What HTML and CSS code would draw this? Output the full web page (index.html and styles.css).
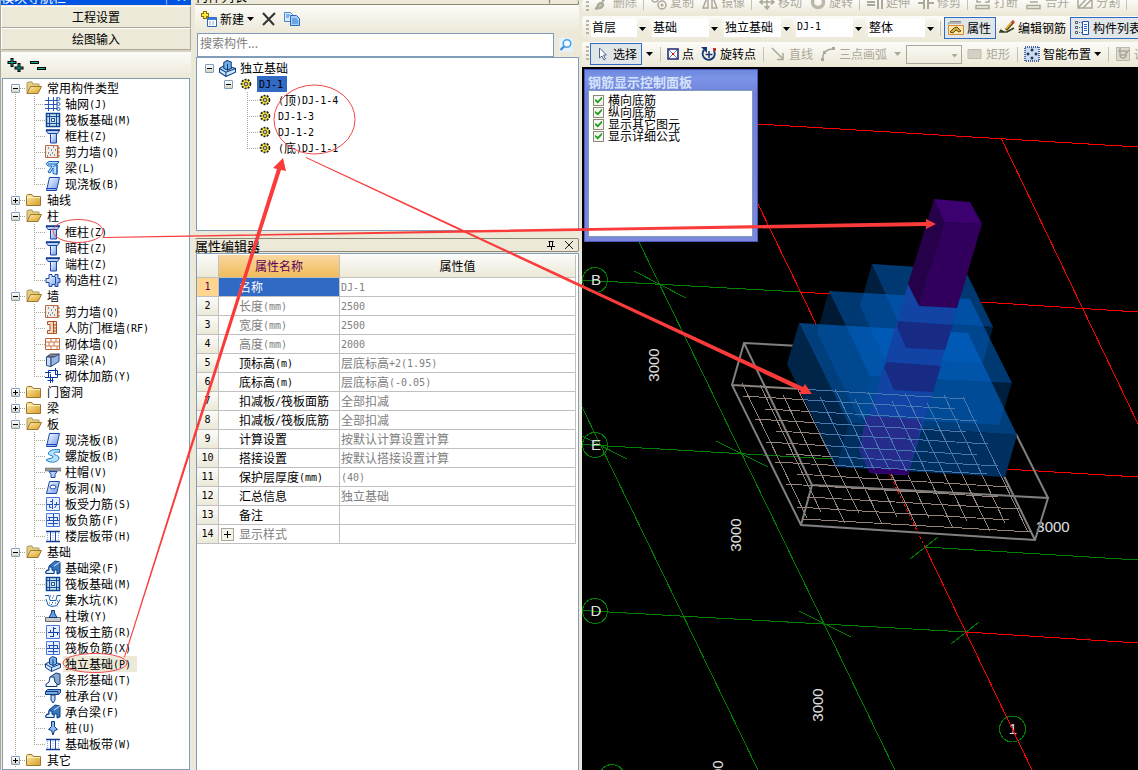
FILE: index.html
```
<!DOCTYPE html>
<html lang="zh-CN">
<head>
<meta charset="utf-8">
<title>独立基础</title>
<link rel="stylesheet" href="styles.css">
</head>
<body>

<svg class="symbols" aria-hidden="true">
	<defs>
		<linearGradient id="g-blue" x1="0" y1="0" x2="1" y2="1"><stop offset="0" stop-color="#fff"/><stop offset="1" stop-color="#6c98e8"/></linearGradient>
		<linearGradient id="g-fold" x1="0" y1="0" x2="1" y2="1"><stop offset="0" stop-color="#fff0a8"/><stop offset="1" stop-color="#d99a28"/></linearGradient>
	</defs>
	<symbol id="i-open" viewBox="0 0 16 16"><path d="M1 13V3l1-1h4l1 2h6v3" fill="#e8d078" stroke="#a89868"/><path d="M1 13.500L4.500 6.500H15.500L12 13.500Z" fill="url(#g-fold)" stroke="#98782c"/></symbol>
	<symbol id="i-folder" viewBox="0 0 16 16"><path d="M.5 13.500V3.500l1-1h4.500l1.500 2h7v9z" fill="url(#g-fold)" stroke="#98782c"/><path d="M1 5.500h13" stroke="#fff6c8"/></symbol>
	<symbol id="i-grid" viewBox="0 0 16 16"><path d="M3.500 1v14M8.500 1v14M0 4.500h13M0 8.500h13M0 12.500h13M12 1v13" stroke="#2858c0" fill="none"/><g fill="#fff" stroke="#2858c0"><circle cx="13.500" cy="3" r="1.500"/><circle cx="13.500" cy="8" r="1.500"/><circle cx="13.500" cy="13" r="1.500"/></g></symbol>
	<symbol id="i-raft" viewBox="0 0 16 16"><path d="M1.500 1.500h13v13h-13z" fill="#c8e0f8" stroke="#0c4890" stroke-width="1.500"/><path d="M4.500 2v12M11.500 2v12M2 4.500h12M2 11.500h12" stroke="#0c4890"/><path d="M6.500 6.500h3v3h-3z" fill="#fff" stroke="#0c4890"/></symbol>
	<symbol id="i-column" viewBox="0 0 16 16"><path d="M1 2.500h13.500l-2 3H3z" fill="#b8d0f8" stroke="#1848a8"/><path d="M1 2h14" stroke="#0c3880" stroke-width="1.500"/><path d="M5.500 5.500h6V15h-6z" fill="url(#g-blue)" stroke="#1848a8"/></symbol>
	<symbol id="i-wall" viewBox="0 0 16 16"><path d="M.5 1.500h12v12H.500z" fill="#eee" stroke="#c06838"/><path d="M13 1v13M13 4h2M13 8h2M13 12h2" stroke="#c05820"/><path d="M3 4h1M8 3h1M6 6h1M10 6h1M3 9h1M7 9h1M5 11h1M9 11h1M2 12h1" stroke="#333"/></symbol>
	<symbol id="i-beam" viewBox="0 0 16 16"><path d="M1 3.500l3-2h10l-2 3v10l-4-1V8L5 13 3 12l4-6H3z" fill="#b8e0ff" stroke="#1860b8"/><path d="M3 4h9l2-2M12 5v9M8 7l4-3" fill="none" stroke="#1860b8"/></symbol>
	<symbol id="i-slab" viewBox="0 0 16 16"><path d="M4.500 1.500h10l-3 13H1.500z" fill="url(#g-blue)" stroke="#1848b0"/><path d="M1.500 12.500h10" stroke="#1848b0"/></symbol>
	<symbol id="i-tie" viewBox="0 0 16 16"><path d="M4 2.500h3v2h3v-2h3v4h2v4h-2v4h-3v-2H7v2H4v-4H1v-4h3z" fill="url(#g-blue)" stroke="#1848a8"/><path d="M10.500 5v7" stroke="#1848a8"/></symbol>
	<symbol id="i-shelter" viewBox="0 0 16 16"><path d="M2.500 1.500h9v12h-9v-3H5v-6H2.500z" fill="#f4d8c0" stroke="#a85020"/><path d="M8.500 2v11M8 5h3M8 8h3M8 11h3" stroke="#a85020"/></symbol>
	<symbol id="i-brick" viewBox="0 0 16 16"><path d="M.5 2.500h14v11H.500z" fill="#fff" stroke="#c06030"/><path d="M1 6h14M1 10h14M6 3v3M11 3v3M4 6v4M9 6v4M6 10v3M12 10v3" stroke="#d07848"/></symbol>
	<symbol id="i-hidden" viewBox="0 0 16 16"><path d="M1.500 5l4-3h9l-3 3z" fill="#889" stroke="#444"/><path d="M1.500 5H6v9.500l-4.500-1z" fill="#c8dcf8" stroke="#284880"/><path d="M6 5h3l5-3v7.500l-8 5z" fill="#98b4e0" stroke="#284880"/></symbol>
	<symbol id="i-mesh" viewBox="0 0 16 16"><path d="M3.500 2.500h9v7h-9zM0 4.500h6M10 6.500h6M0 9.500h4M5.500 6v9M10.500 0v6M7.500 9.500v5M2.500 12.500h6" fill="none" stroke="#0838a8"/></symbol>
	<symbol id="i-spiral" viewBox="0 0 16 16"><path d="M14.500 1.500C7 1 3 3 3.500 6c.5 2 5 1 4.500 3-.5 2-5 1-7 3 5 4 13 2 13-2 0-3-5-2.500-5-4.500 0-1.500 3-2 5.500-1z" fill="#b8e0ff" stroke="#1880d0"/></symbol>
	<symbol id="i-cap" viewBox="0 0 16 16"><path d="M0 4h16v3H0z" fill="#999" stroke="#555" stroke-width=".5"/><path d="M4 7.500h8l-2 3v3H6v-3z" fill="#b8d0f8" stroke="#1848a8"/></symbol>
	<symbol id="i-hole" viewBox="0 0 16 16"><path d="M4.500 1.500h10l-3 12H1.500z" fill="url(#g-blue)" stroke="#1848b0"/><ellipse cx="8" cy="7" rx="3" ry="2" fill="#fff" stroke="#1848b0"/></symbol>
	<symbol id="i-rebar" viewBox="0 0 16 16"><path d="M1.500 1.500h13v13h-13z" fill="#e8f0ff" stroke="#4878d8"/><path d="M2 8.500h5M9 8.500h5M7.500 3v10M5 5.500h2.500M4.500 8.500v3h2M11.500 6v3l-2 3" stroke="#2050b8" fill="none"/></symbol>
	<symbol id="i-negbar" viewBox="0 0 16 16"><path d="M1.500 1.500h13v13h-13z" fill="#e8f0ff" stroke="#4878d8"/><path d="M3 5.500h10M3 11.500h10M8.500 2v12M4.500 5v3M12.500 5v3M2 8.500h12" stroke="#2050b8" fill="none"/></symbol>
	<symbol id="i-band" viewBox="0 0 16 16"><path d="M1 3.500h14M1 13.500h14" stroke="#0c3890" stroke-width="1.500"/><path d="M5.500 4v9M10.500 4v9" stroke="#1848a8"/><path d="M2.500 5v7M8 5v7M13.500 5v7" stroke="#88a8e0" stroke-dasharray="1 1"/></symbol>
	<symbol id="i-fbeam" viewBox="0 0 16 16"><path d="M1 13.500V11l3-2V6l6-5 5 1v11l-3 1v-4H9v3.500z" fill="#3878c0" stroke="#0c3c80"/><path d="M1 13.500V11l3-1V7h3v3l2 1v2.500z" fill="#d8ecff" stroke="#0c3c80"/><path d="M9 6l6-4" stroke="#d8ecff"/></symbol>
	<symbol id="i-pit" viewBox="0 0 16 16"><path d="M0 3.500h4l1 5h6l1-5h4M1 7l2 6 4 1.500 5-1 3-6" fill="none" stroke="#1860b8"/><path d="M5 4h1M8 4h1M7 6h1M4 11h1M7 10.500h1M10 11h1M6 12.500h1M12 9h1" stroke="#1848a8"/></symbol>
	<symbol id="i-pier" viewBox="0 0 16 16"><path d="M.5 9.500h15v4H.500z" fill="#ccc" stroke="#666"/><path d="M6.500 2.500h3V5l2.500 4.500H4L6.500 5z" fill="#68a0e0" stroke="#0c3c80"/></symbol>
	<symbol id="i-main" viewBox="0 0 16 16"><path d="M1.500 1.500h13v13h-13z" fill="#e8f0ff" stroke="#4878d8"/><path d="M3 8.500h11M8.500 3v10M5.500 6v3M12.500 8v3M8 4.500h3M5 12.500h3" stroke="#1040a8" fill="none"/></symbol>
	<symbol id="i-found" viewBox="0 0 16 16"><path d="M.5 8l5-3 10 3v3.500l-9 4-6-4z" fill="#d0e8ff" stroke="#0c3c80"/><path d="M.5 8l6 3.500 9-3.500M6.500 11.500v4" fill="none" stroke="#0c3c80"/><path d="M4.500 2.500l3-2 4 1.500v6L8 9.500 4.500 8z" fill="#78b0e8" stroke="#0c3c80"/><path d="M8 3.500v6" stroke="#0c3c80"/></symbol>
	<symbol id="i-strip" viewBox="0 0 16 16"><path d="M5 5l6-4 4 1v10l-4 1z" fill="#88a8c8" stroke="#0c3c80"/><path d="M1 14.500V12l3-2 1-5h4l1 5 2 2v2.500z" fill="#f4faff" stroke="#0c3c80"/></symbol>
	<symbol id="i-pilecap" viewBox="0 0 16 16"><path d="M.5 3.500l2-2h13v3l-2 2H.500z" fill="#78a8e0" stroke="#0c3c80"/><path d="M1 3.500h12v3" fill="none" stroke="#0c3c80"/><path d="M6 7h4v5l-2 3-2-3z" fill="#b8d8f8" stroke="#0c3c80"/></symbol>
	<symbol id="i-pile" viewBox="0 0 16 16"><path d="M6.500 1.500h3v5l3 3-3 1-1.500 4.500-1.500-4.500-3-1 3-3z" fill="#88b8f0" stroke="#0c3c80"/></symbol>
	<symbol id="i-gear" viewBox="0 0 12 12"><circle cx="6" cy="6" r="4.500" fill="#fff040" stroke="#222" stroke-width="1.600" stroke-dasharray="2 1.200"/><path d="M6 2v8M2 6h8M3 3l6 6M9 3l-6 6" stroke="#444" stroke-width=".5"/><circle cx="6" cy="6" r="1.500" fill="#fff" stroke="#222" stroke-width=".8"/></symbol>
</svg>

<main class="app">

<nav class="nav">
	<header class="nav-title"><span>模块导航栏</span><span class="marks">┬ ✕</span></header>
	<button class="nav-btn">工程设置</button>
	<button class="nav-btn">绘图输入</button>
	<div class="nav-tools">
		<button class="tool" aria-label="展开"><svg width="17" height="16" viewBox="0 0 17 16"><path d="M5 1v9M.5 5.500h9M12 6v9M7.500 11h9" stroke="#000" stroke-width="3"/><path d="M5 2v7M1.500 5.500h7M12 7v7M8.500 11h7" stroke="#18a898"/></svg></button>
		<button class="tool" aria-label="折叠"><svg width="17" height="16" viewBox="0 0 17 16"><path d="M0 5.500h9M7 11.500h9" stroke="#000" stroke-width="3"/><path d="M1 5.500h7M8 11.500h7" stroke="#18a898"/></svg></button>
	</div>
	<ul class="tree">
		<li><div class="row"><button class="exp minus" aria-label="折叠"></button><svg><use href="#i-open"/></svg>常用构件类型</div>
			<ul>
				<li><svg><use href="#i-grid"/></svg><span>轴网<i>(J)</i></span></li>
				<li><svg><use href="#i-raft"/></svg><span>筏板基础<i>(M)</i></span></li>
				<li><svg><use href="#i-column"/></svg><span>框柱<i>(Z)</i></span></li>
				<li><svg><use href="#i-wall"/></svg><span>剪力墙<i>(Q)</i></span></li>
				<li><svg><use href="#i-beam"/></svg><span>梁<i>(L)</i></span></li>
				<li><svg><use href="#i-slab"/></svg><span>现浇板<i>(B)</i></span></li>
			</ul>
		</li>
		<li><div class="row"><button class="exp plus" aria-label="展开"></button><svg><use href="#i-folder"/></svg>轴线</div></li>
		<li><div class="row"><button class="exp minus" aria-label="折叠"></button><svg><use href="#i-open"/></svg>柱</div>
			<ul>
				<li><svg><use href="#i-column"/></svg><span>框柱<i>(Z)</i></span></li>
				<li><svg><use href="#i-column"/></svg><span>暗柱<i>(Z)</i></span></li>
				<li><svg><use href="#i-column"/></svg><span>端柱<i>(Z)</i></span></li>
				<li><svg><use href="#i-tie"/></svg><span>构造柱<i>(Z)</i></span></li>
			</ul>
		</li>
		<li><div class="row"><button class="exp minus" aria-label="折叠"></button><svg><use href="#i-open"/></svg>墙</div>
			<ul>
				<li><svg><use href="#i-wall"/></svg><span>剪力墙<i>(Q)</i></span></li>
				<li><svg><use href="#i-shelter"/></svg><span>人防门框墙<i>(RF)</i></span></li>
				<li><svg><use href="#i-brick"/></svg><span>砌体墙<i>(Q)</i></span></li>
				<li><svg><use href="#i-hidden"/></svg><span>暗梁<i>(A)</i></span></li>
				<li><svg><use href="#i-mesh"/></svg><span>砌体加筋<i>(Y)</i></span></li>
			</ul>
		</li>
		<li><div class="row"><button class="exp plus" aria-label="展开"></button><svg><use href="#i-folder"/></svg>门窗洞</div></li>
		<li><div class="row"><button class="exp plus" aria-label="展开"></button><svg><use href="#i-folder"/></svg>梁</div></li>
		<li><div class="row"><button class="exp minus" aria-label="折叠"></button><svg><use href="#i-open"/></svg>板</div>
			<ul>
				<li><svg><use href="#i-slab"/></svg><span>现浇板<i>(B)</i></span></li>
				<li><svg><use href="#i-spiral"/></svg><span>螺旋板<i>(B)</i></span></li>
				<li><svg><use href="#i-cap"/></svg><span>柱帽<i>(V)</i></span></li>
				<li><svg><use href="#i-hole"/></svg><span>板洞<i>(N)</i></span></li>
				<li><svg><use href="#i-rebar"/></svg><span>板受力筋<i>(S)</i></span></li>
				<li><svg><use href="#i-negbar"/></svg><span>板负筋<i>(F)</i></span></li>
				<li><svg><use href="#i-band"/></svg><span>楼层板带<i>(H)</i></span></li>
			</ul>
		</li>
		<li><div class="row"><button class="exp minus" aria-label="折叠"></button><svg><use href="#i-open"/></svg>基础</div>
			<ul>
				<li><svg><use href="#i-fbeam"/></svg><span>基础梁<i>(F)</i></span></li>
				<li><svg><use href="#i-raft"/></svg><span>筏板基础<i>(M)</i></span></li>
				<li><svg><use href="#i-pit"/></svg><span>集水坑<i>(K)</i></span></li>
				<li><svg><use href="#i-pier"/></svg><span>柱墩<i>(Y)</i></span></li>
				<li><svg><use href="#i-main"/></svg><span>筏板主筋<i>(R)</i></span></li>
				<li><svg><use href="#i-negbar"/></svg><span>筏板负筋<i>(X)</i></span></li>
				<li><svg><use href="#i-found"/></svg><span class="current">独立基础<i>(P)</i></span></li>
				<li><svg><use href="#i-strip"/></svg><span>条形基础<i>(T)</i></span></li>
				<li><svg><use href="#i-pilecap"/></svg><span>桩承台<i>(V)</i></span></li>
				<li><svg><use href="#i-fbeam"/></svg><span>承台梁<i>(F)</i></span></li>
				<li><svg><use href="#i-pile"/></svg><span>桩<i>(U)</i></span></li>
				<li><svg><use href="#i-band"/></svg><span>基础板带<i>(W)</i></span></li>
			</ul>
		</li>
		<li><div class="row"><button class="exp plus" aria-label="展开"></button><svg><use href="#i-folder"/></svg>其它</div></li>
	</ul>
</nav>

<section class="middle">
	<header class="pane-title clipped"><span>构件列表</span><span class="marks">┬ ✕</span></header>
	<div class="list-tools">
		<button class="tool"><svg width="17" height="16" viewBox="0 0 17 16"><path d="M5 0v8M1 4h8" stroke="#8a7400" stroke-width="4"/><path d="M5 1v6M2 4h6" stroke="#ffe840" stroke-width="2"/><path d="M7.500 6.500h9v9h-9z" fill="#fff" stroke="#3068b8"/><path d="M8 8h8" stroke="#3880e0" stroke-width="2"/><path d="M9 11h6M9 13h6" stroke="#88a8d8" stroke-dasharray="2 1"/></svg>新建<b class="arrow"></b></button>
		<button class="tool" aria-label="删除"><svg width="14" height="14" viewBox="0 0 14 14"><path d="M1 1l11 12M13 1L1 13" stroke="#333" stroke-width="2"/></svg></button>
		<button class="tool" aria-label="复制"><svg width="16" height="14" viewBox="0 0 16 14"><path d="M.5.500h6l2 2v7h-8z" fill="#d8ecff" stroke="#4888d0"/><path d="M6.500 3.500h6l3 3v7h-9z" fill="#a8d0f8" stroke="#2868c0"/><path d="M2 3h4M2 5h3M8 7h5M8 9h6M8 11h6" stroke="#3878c8"/></svg></button>
	</div>
	<div class="search">
		<input type="text" placeholder="搜索构件..." aria-label="搜索构件">
		<button class="tool" aria-label="搜索"><svg width="14" height="14" viewBox="0 0 14 14"><path d="M0 0h14v14H0z" fill="#e4f2fd"/><circle cx="8" cy="5.500" r="3.800" fill="#f4faff" stroke="#48a0e8" stroke-width="1.600"/><path d="M5 8.500L1.500 12" stroke="#3888d8" stroke-width="2.200"/></svg></button>
	</div>
	<ul class="parts">
		<li><button class="exp minus" aria-label="折叠"></button><svg class="big"><use href="#i-found"/></svg><span>独立基础</span></li>
		<li class="lv2"><button class="exp minus" aria-label="折叠"></button><svg><use href="#i-gear"/></svg><span class="picked"><i>DJ-1</i></span></li>
		<li class="lv3"><svg><use href="#i-gear"/></svg><span><i>(</i>顶<i>)DJ-1-4</i></span></li>
		<li class="lv3"><svg><use href="#i-gear"/></svg><span><i>DJ-1-3</i></span></li>
		<li class="lv3"><svg><use href="#i-gear"/></svg><span><i>DJ-1-2</i></span></li>
		<li class="lv3"><svg><use href="#i-gear"/></svg><span><i>(</i>底<i>)DJ-1-1</i></span></li>
	</ul>
	<header class="pane-title"><span>属性编辑器</span>
		<button class="tool" aria-label="固定"><svg width="10" height="10" viewBox="0 0 10 10"><path d="M2.500 1.500h5M3.500 1v5M6.500 1v5M1 6.500h8M5.500 7v3" stroke="#000" fill="none"/></svg></button>
		<button class="tool" aria-label="关闭"><svg width="10" height="10" viewBox="0 0 10 10"><path d="M1 1l8 8M9 1L1 9" stroke="#222" fill="none"/></svg></button>
	</header>
	<div class="props">
		<table>
			<thead><tr><th class="num"></th><th class="name">属性名称</th><th>属性值</th></tr></thead>
			<tbody>
				<tr class="sel"><th>1</th><td>名称</td><td><i>DJ-1</i></td></tr>
				<tr class="off"><th>2</th><td>长度<i>(mm)</i></td><td><i>2500</i></td></tr>
				<tr class="off"><th>3</th><td>宽度<i>(mm)</i></td><td><i>2500</i></td></tr>
				<tr class="off"><th>4</th><td>高度<i>(mm)</i></td><td><i>2000</i></td></tr>
				<tr><th>5</th><td>顶标高<i>(m)</i></td><td>层底标高<i>+2(1.95)</i></td></tr>
				<tr><th>6</th><td>底标高<i>(m)</i></td><td>层底标高<i>(-0.05)</i></td></tr>
				<tr><th>7</th><td>扣减板<i>/</i>筏板面筋</td><td>全部扣减</td></tr>
				<tr><th>8</th><td>扣减板<i>/</i>筏板底筋</td><td>全部扣减</td></tr>
				<tr><th>9</th><td>计算设置</td><td>按默认计算设置计算</td></tr>
				<tr><th>10</th><td>搭接设置</td><td>按默认搭接设置计算</td></tr>
				<tr><th>11</th><td>保护层厚度<i>(mm)</i></td><td><i>(40)</i></td></tr>
				<tr><th>12</th><td>汇总信息</td><td>独立基础</td></tr>
				<tr><th>13</th><td>备注</td><td></td></tr>
				<tr class="off group"><th>14</th><td><button class="more" aria-label="展开"></button>显示样式</td><td></td></tr>
			</tbody>
		</table>
	</div>
</section>

<section class="work">
	<div class="bar edit-bar">
		<b class="grip"></b>
		<button class="tool off"><svg width="16" height="16" viewBox="0 0 16 16"><path d="M15 0L8 8M1 15c4-1 1-6 6-6 3 0 3 4-1 5z" fill="#c8c5b6" stroke="#aca899" stroke-width="2"/></svg>删除</button><b class="sep"></b>
		<button class="tool off"><svg width="16" height="16" viewBox="0 0 16 16"><circle cx="4" cy="5" r="3" fill="none" stroke="#aca899" stroke-width="1.500"/><circle cx="11" cy="11" r="4" fill="none" stroke="#aca899" stroke-width="1.500"/><circle cx="11" cy="11" r="1.500" fill="#aca899"/></svg>复制</button>
		<button class="tool off"><svg width="16" height="16" viewBox="0 0 16 16"><path d="M6 1v13H1zM10 1v13h5z" fill="none" stroke="#aca899" stroke-width="1.500"/></svg>镜像</button><b class="sep"></b>
		<button class="tool off"><svg width="16" height="16" viewBox="0 0 16 16"><path d="M8 1v14M1 8h14M5.500 4L8 1l2.500 3M5.500 12L8 15l2.500-3M4 5.500L1 8l3 2.500M12 5.500L15 8l-3 2.500" fill="none" stroke="#aca899" stroke-width="1.500"/></svg>移动</button>
		<button class="tool off"><svg width="16" height="16" viewBox="0 0 16 16"><circle cx="8" cy="8" r="5.500" fill="none" stroke="#bbb8aa" stroke-width="3.500"/></svg>旋转</button><b class="sep"></b>
		<button class="tool off"><svg width="16" height="16" viewBox="0 0 16 16"><path d="M0 8h8M0 11h8M11 2v13M15 2v13" stroke="#aca899" stroke-width="2"/></svg>延伸</button>
		<button class="tool off"><svg width="16" height="16" viewBox="0 0 16 16"><path d="M0 9h6M10 9h6M6 2v13M10 2v13" stroke="#aca899" stroke-width="2"/></svg>修剪</button><b class="sep"></b>
		<button class="tool off"><svg width="16" height="16" viewBox="0 0 16 16"><path d="M2 4v4h4M14 4v4h-4M1 11.500h13v3H1z" fill="none" stroke="#aca899" stroke-width="1.500"/></svg>打断</button>
		<button class="tool off"><svg width="16" height="16" viewBox="0 0 16 16"><path d="M4 8h8M1 11.500h13v3H1z" fill="none" stroke="#aca899" stroke-width="1.500"/></svg>合并</button>
		<button class="tool off"><svg width="16" height="16" viewBox="0 0 16 16"><path d="M1 4h14v10H1zM1 14L13 1M6 14l9-9" fill="none" stroke="#aca899" stroke-width="1.500"/></svg>分割</button><b class="sep"></b>
	</div>
	<div class="bar combo-bar">
		<b class="grip"></b>
		<span class="combo small"><select aria-label="楼层"><option>首层</option></select></span>
		<span class="combo"><select aria-label="构件类型"><option>基础</option></select></span>
		<span class="combo"><select aria-label="构件"><option>独立基础</option></select></span>
		<span class="combo latin"><select aria-label="构件名称"><option>DJ-1</option></select></span>
		<span class="combo"><select aria-label="单元"><option>整体</option></select></span>
		<b class="sep"></b>
		<button class="tool on"><svg width="16" height="16" viewBox="0 0 16 16"><path d="M2 1.500h11M0 6V3h13" stroke="#888" fill="none"/><path d="M.5 5.500h15v9H.500z" fill="#ffe8b0" stroke="#e08828"/><path d="M2 12l4-4 3-1 4 4-2 1-3-2-3 3z" fill="#d8b040" stroke="#604810"/></svg>属性</button>
		<button class="tool"><svg width="16" height="16" viewBox="0 0 16 16"><path d="M0 12h8l7-4M1 10l4 2" stroke="#304020" stroke-width="1.500" fill="none"/><path d="M14 2L7 10" stroke="#604818" stroke-width="3"/><path d="M13 2l-6 7" stroke="#e8b838" stroke-width="1.500"/><path d="M15 1l-2 2" stroke="#d04040" stroke-width="3"/></svg>编辑钢筋</button>
		<button class="tool on"><svg width="16" height="16" viewBox="0 0 16 16"><path d="M1.500 1.500h2v2h-2zM1.500 6.500h2v2h-2zM1.500 11.500h2v2h-2z" fill="#fff" stroke="#555"/><path d="M5 2.500h3M5 7.500h3M5 12.500h3" stroke="#3868c8" stroke-dasharray="1 1"/><path d="M8.500 1.500h6v13h-6z" fill="#fff" stroke="#2050a8"/><path d="M10 4.500h3M10 6.500h3M10 8.500h3M10 10.500h3" stroke="#2868d8"/></svg>构件列表</button>
	</div>
	<div class="bar draw-bar">
		<b class="grip"></b>
		<button class="tool on"><svg width="16" height="16" viewBox="0 0 16 16"><path d="M5.500 2v10l2.500-2 2 4 1.500-1-2-4h3z" fill="#fff" stroke="#506890"/></svg>选择</button><b class="arrow"></b><b class="sep"></b>
		<button class="tool"><svg width="12" height="12" viewBox="0 0 12 12"><path d="M1 1h10v10H1z" fill="#fff" stroke="#182870" stroke-width="1.500"/><path d="M2 2l8 8M10 2l-8 8" stroke="#6878a8"/><path d="M5 5h2v2H5z" fill="#e00000"/></svg>点</button>
		<button class="tool"><svg width="16" height="16" viewBox="0 0 16 16"><path d="M3 4a6 6 0 1 0 10 1" fill="none" stroke="#183878" stroke-width="2"/><path d="M0 1h6v6z" fill="#183878"/><path d="M8 5v7M4.500 8.500h7" stroke="#183878" stroke-width="1.500"/><path d="M12 2h3v3h-3z" fill="#c03030"/></svg>旋转点</button><b class="sep"></b>
		<button class="tool off"><svg width="16" height="16" viewBox="0 0 16 16"><path d="M2 2l11 11M13 7v6.500H7" fill="none" stroke="#aca899" stroke-width="1.500"/></svg>直线</button>
		<button class="tool off"><svg width="16" height="16" viewBox="0 0 16 16"><path d="M3 13C2 7 6 3 13 3" fill="none" stroke="#aca899" stroke-width="1.500"/><path d="M1 12h3v3H1zM12 1h3v3h-3zM3 5h3v3H3z" fill="#aca899"/></svg>三点画弧</button><b class="arrow off"></b>
		<span class="combo blank"><select aria-label="画弧方式" disabled><option></option></select></span>
		<button class="tool off"><svg width="16" height="16" viewBox="0 0 16 16"><path d="M1 3.500h13v9H1z" fill="#d4d1c4" stroke="#c0bdae"/></svg>矩形</button><b class="sep"></b>
		<button class="tool"><svg width="16" height="16" viewBox="0 0 16 16"><path d="M1 1h14v14H1z" fill="#c8dcf8" stroke="#183878" stroke-width="1.500" stroke-dasharray="1 1"/><path d="M8 2.500v3M6.500 4h3M8 10.500v3M6.500 12h3M2.500 8h3M4 6.500v3M10.500 8h3M12 6.500v3" stroke="#000"/></svg>智能布置<b class="arrow"></b></button><b class="sep"></b>
		<button class="tool off"><svg width="16" height="16" viewBox="0 0 16 16"><path d="M1.500 1.500h13v13h-13z" fill="#dddace" stroke="#bbb8aa"/><path d="M3 5h8v4a3 3 0 0 1-6 0V2M5 9h5l4-5" fill="none" stroke="#aca899" stroke-width="1.500"/></svg>调整</button>
	</div>

	<div class="viewport">
		<svg class="scene">
			<defs>
				<clipPath id="solid"><path d="M787 364L799 323L829 291L872 264L968 271L1017 435L1005 477L836 467Z"/></clipPath>
				<g id="bars" class="crisp" fill="none" stroke="currentColor">
					<path d="M733 385L965 399M743 396L955 409M765 409L977 421M755 419L966 432M776 431L988 444M766 442L977 455M786 454L998 466M775 462L987 474M797 474L1009 487M786 484L998 497M807 497L1019 509M797 507L1009 520M803 519L1032 532"/>
					<path d="M742 383L807 518M760 385L821 512M783 395L845 523M798 390L859 513M820 397L882 524M835 389L897 517M855 399L917 527M868 392L929 518M892 401L953 528M905 393L967 521M927 403L990 531M944 395L1005 523M963 397L1028 532"/>
				</g>
			</defs>
			<g class="space">
				<g class="crisp" fill="none" stroke="#008000">
					<path d="M582 280L800 292M582 444.500L832 459M582 610.500L966 632M925 547L1138 560"/>
					<path d="M639 242L895 770M582 407L758 770"/>
					<path d="M634 271L686 298M716 441L768 467M582 436L627 459M799 611L851 637M910 559L938 537M951 644L979 622"/>
				</g>
				<g class="dims">
					<text transform="translate(659 365) rotate(-90)">3000</text>
					<text transform="translate(741 535) rotate(-90)">3000</text>
					<text transform="translate(823 705) rotate(-90)">3000</text>
					<text transform="translate(723 777) rotate(-90)">3000</text>
					<text x="1053" y="532">3000</text>
					<text x="1013" y="734">1</text>
					<text x="596" y="285">B</text>
					<text x="596" y="450">E</text>
					<text x="596" y="616">D</text>
				</g>
				<g class="crisp" fill="none" stroke="#008000">
					<circle cx="595" cy="280" r="12.500"/><circle cx="595" cy="445" r="12.500"/><circle cx="595" cy="611" r="12.500"/><circle cx="612" cy="777" r="12.500"/><circle cx="1012.500" cy="729" r="13"/>
				</g>
				<g class="crisp" fill="none" stroke="#f00">
					<path d="M757 124L1138 147M1001 138L1138 424M757 202L818 328M800 292L830 294M981 302L1138 312M1004 469L1138 477M966 632L1138 643M925 547L1032 770"/>
					<path d="M889 473L925 547" stroke-dasharray="3 2"/>
				</g>
				<g fill="none" stroke="#808080" stroke-width="2">
					<path d="M800 346L744 343L732 385L801 525L1035 540L1048 498L812 485L744 343M812 485L801 525M1048 498L1016 434M1035 540L1004 476M732 385L802 389"/>
				</g>
				<use href="#bars" color="#95847c"/>
				<g fill="#0068d0">
					<path d="M799 323L787 364L836 467L848 423Z" fill="#002548"/>
					<path d="M848 423L1017 435L1005 477L836 467Z" fill="#003060"/>
					<path d="M799 323L968 333L1017 435L848 423Z" fill="#003f7c"/>
					<path d="M829 291L817 332L858 417L870 376Z" fill-opacity=".25"/>
					<path d="M829 291L970 299L1012 383L870 376Z" fill-opacity=".54"/>
					<path d="M870 376L1012 383L999 425L858 417Z" fill-opacity=".3"/>
					<path d="M872 264L860 306L884 357L897 320Z" fill-opacity=".3"/>
					<path d="M872 264L965 270L993 327L897 320Z" fill-opacity=".54"/>
					<path d="M897 320L993 327L983 363L884 357Z" fill-opacity=".3"/>
				</g>
				<path d="M908 284L919 306L957 308L908 475L870 473L859 450Z" fill="#1244a6"/>
				<path d="M898 321L953 325L945 350L906 348L897 327Z" fill="#172a84"/>
				<path d="M887 362L941 366L933 392L894 390L884 367Z" fill="#172a84"/>
				<path d="M866 416L922 420L908 475L870 473L859 450Z" fill="#252c8c"/>
				<path d="M867 467L910 469L908 475L870 473Z" fill="#30006a"/>
				<path d="M934 199L944 222L919 306L908 284Z" fill="#260048"/>
				<path d="M944 222L982 224L957 308L919 306Z" fill="#30005c"/>
				<path d="M934 199L970 202L982 224L944 222Z" fill="#3c0070"/>
				<use href="#bars" color="#4878b0" clip-path="url(#solid)"/>
			</g>
		</svg>
		<form class="dialog">
			<h2>钢筋显示控制面板</h2>
			<div class="checks">
				<label><input type="checkbox" checked>横向底筋</label>
				<label><input type="checkbox" checked>纵向底筋</label>
				<label><input type="checkbox" checked>显示其它图元</label>
				<label><input type="checkbox" checked>显示详细公式</label>
			</div>
		</form>
	</div>
</section>

<svg class="notes" aria-hidden="true">
	<g fill="none" stroke="#f04848">
		<ellipse cx="78" cy="231" rx="25" ry="11.500"/>
		<ellipse cx="95" cy="663" rx="32" ry="9.500"/>
		<ellipse cx="314.500" cy="119.500" rx="40.500" ry="34.500"/>
	</g>
	<g fill="#fb3a3a">
		<path d="M103 237L926 222V219L936 224L926 229V226L103 238Z"/>
		<path d="M124 657L277 169L273 168L283 158L286 171L281 170L125 657Z"/>
		<path d="M306 157L803 387L805 384L812 394L799 394L801 391L306 158Z"/>
	</g>
</svg>

</main>
</body>
</html>
```
FILE: styles.css
```
* {
	box-sizing: border-box;
}
body {
	margin: 0;
	background: #ece9d8;
	color: #000;
	font: 12px/16px "Noto Sans CJK SC", sans-serif;
}
ul {
	list-style: none;
	margin: 0;
	padding: 0;
}
button {
	border: 0;
	padding: 0;
	background: none;
	color: inherit;
	font: inherit;
}
/* half-width latin next to the 12px hanzi */
i {
	font: 10px/12px "DejaVu Sans Mono", monospace;
	vertical-align: 1px;
}
svg {
	flex: none;
}
.symbols {
	position: absolute;
	width: 0;
	height: 0;
}
.app {
	position: relative;
	display: flex;
	height: 100vh;
	overflow: hidden;
}

/* navigation */
.nav {
	flex: none;
	display: flex;
	flex-direction: column;
	width: 191px;
	border-left: 1px solid #aca899;
}
.nav-title {
	flex: none;
	display: flex;
	justify-content: space-between;
	align-items: flex-end;
	height: 5px;
	margin-bottom: 1px;
	overflow: hidden;
	background: #0054e3;
	color: #fff;
	font-size: 13px;
	line-height: 16px;
}
.marks {
	margin-right: 4px;
}
.nav-btn {
	flex: none;
	height: 22px;
	border: 1px solid;
	border-color: #fff #aca899 #aca899 #fff;
	background: #ece9d8;
}
.nav-tools {
	flex: none;
	display: flex;
	gap: 6px;
	height: 28px;
	padding: 6px;
	border-top: 2px solid #d8d4c4;
	background: linear-gradient(#fcfbf8, #ece9d8);
}
.tree {
	flex: 1;
	min-height: 0;
	overflow: hidden;
	margin: 0 1px;
	padding-top: 1px;
	border: 1px solid #7f9db9;
	background: #fff;
}
.tree > li {
	background: repeating-linear-gradient(#aca899 0 1px, transparent 1px 2px) 12px 0 / 1px 100% no-repeat;
}
.tree > li:first-child {
	background-position: 12px 8px;
}
.row {
	display: flex;
	align-items: center;
	height: 16px;
	padding-left: 8px;
	white-space: nowrap;
	background: repeating-linear-gradient(to right, #aca899 0 1px, transparent 1px 2px) 17px 8px / 6px 1px no-repeat;
}
.row svg {
	width: 16px;
	height: 16px;
	margin: 0 5px 0 6px;
}
.exp {
	flex: none;
	width: 9px;
	height: 9px;
	border: 1px solid #7f9db9;
	border-radius: 1px;
}
.minus {
	background: linear-gradient(#000, #000) center / 5px 1px no-repeat, linear-gradient(#fff, #d8d4c4);
}
.plus {
	background: linear-gradient(#000, #000) center / 5px 1px no-repeat, linear-gradient(#000, #000) center / 1px 5px no-repeat, linear-gradient(#fff, #d8d4c4);
}
.tree ul {
	margin-left: 31px;
}
.tree ul li {
	display: flex;
	align-items: center;
	height: 16px;
	padding-left: 11px;
	white-space: nowrap;
	background:
		repeating-linear-gradient(#aca899 0 1px, transparent 1px 2px) 0 0 / 1px 100% no-repeat,
		repeating-linear-gradient(to right, #aca899 0 1px, transparent 1px 2px) 0 8px / 11px 1px no-repeat;
}
.tree ul li:last-child {
	background-size: 1px 8px, 11px 1px;
}
.tree ul svg {
	width: 16px;
	height: 16px;
	margin-right: 2px;
}
.tree ul span {
	padding: 0 6px 0 2px;
}
.tree .current {
	background: #ece9d8;
}

/* component list + property editor */
.middle {
	flex: none;
	display: flex;
	flex-direction: column;
	width: 384px;
	margin-left: 4px;
}
.pane-title {
	flex: none;
	display: flex;
	align-items: center;
	gap: 8px;
	height: 14px;
	margin-top: 7px;
	padding-right: 4px;
	border: 1px solid #8c8878;
	border-left: 0;
	border-radius: 2px;
	font-size: 13px;
	line-height: 13px;
}
.pane-title span:first-child {
	flex: 1;
}
.clipped {
	align-items: flex-end;
	height: 5px;
	margin-top: 0;
	border-top: 0;
	overflow: hidden;
	line-height: 16px;
}
.tool {
	flex: none;
	display: flex;
	align-items: center;
	gap: 3px;
	white-space: nowrap;
}
.arrow {
	flex: none;
	width: 7px;
	height: 4px;
	background: #000;
	clip-path: polygon(0 0, 100% 0, 50% 100%);
}
.arrow.off {
	background: #aca899;
}
.list-tools {
	flex: none;
	display: flex;
	align-items: center;
	gap: 8px;
	height: 28px;
	padding-left: 5px;
	background: linear-gradient(#fcfbf8, #ece9d8);
}
.search {
	flex: none;
	display: flex;
	gap: 5px;
	height: 24px;
	margin-left: 2px;
}
.search input {
	width: 357px;
	padding: 0 2px 4px;
	border: 1px solid #7f9db9;
	background: #fff;
	font: inherit;
}
.search input::placeholder {
	color: #808080;
}
.parts {
	flex: none;
	height: 174px;
	margin-left: 1px;
	padding: 2px 8px;
	border: 1px solid #7f9db9;
	background: #fff;
}
.parts li {
	display: flex;
	align-items: center;
	height: 16px;
}
.parts svg {
	width: 12px;
	height: 12px;
	margin: 0 5px 0 7px;
}
.parts .big {
	width: 17px;
	height: 17px;
	margin: 0 4px 0 5px;
}
.parts .lv2 {
	padding-left: 19px;
}
.parts .lv3 {
	margin-left: 42px;
	padding-left: 5px;
	background:
		repeating-linear-gradient(#aca899 0 1px, transparent 1px 2px) 0 0 / 1px 100% no-repeat,
		repeating-linear-gradient(to right, #aca899 0 1px, transparent 1px 2px) 0 8px / 11px 1px no-repeat;
}
.parts .lv3 span {
	padding-left: 2px;
}
.parts .lv3:last-child {
	background-size: 1px 8px, 11px 1px;
}
.parts .picked {
	padding: 0 4px 0 2px;
	background: #316ac5;
}
.props {
	flex: 1;
	min-height: 0;
	margin: 1px 0 0 1px;
	padding: 1px 2px 0 0;
	border: 1px solid #7f9db9;
	border-bottom: 0;
	background: #fff;
}
table {
	width: 100%;
	table-layout: fixed;
	border-collapse: separate;
	border-spacing: 0;
}
th,
td {
	height: 19px;
	padding: 0 0 0 1px;
	border-right: 1px solid #c0c0c0;
	border-bottom: 1px solid #c0c0c0;
	line-height: 16px;
	text-align: left;
	font-weight: normal;
	white-space: nowrap;
}
th {
	padding: 0;
	text-align: center;
	background: linear-gradient(#fcfbf8, #ece9d8);
}
thead th {
	height: 23px;
}
tbody th {
	font: 10px/16px "DejaVu Sans Mono", monospace;
}
.num {
	width: 22px;
}
.name {
	width: 121px;
	color: #600058;
	background: linear-gradient(#fad8a0, #f0bc5c);
}
td:nth-child(2) {
	padding-left: 20px;
}
td:nth-child(3),
.off td {
	color: #808080;
}
.sel th {
	background: #ffd590;
	color: #600058;
}
.sel td:nth-child(2) {
	background: #316ac5;
	color: #fff;
}
.group td:nth-child(2) {
	display: flex;
	align-items: center;
	gap: 5px;
	padding-left: 2px;
}
.more {
	width: 13px;
	height: 13px;
	border: 1px solid #aca899;
	background: linear-gradient(#000, #000) center / 7px 1px no-repeat, linear-gradient(#000, #000) center / 1px 7px no-repeat, #f4f2ea;
}

/* toolbars */
.work {
	flex: 1;
	display: flex;
	flex-direction: column;
	min-width: 0;
	padding-left: 3px;
}
.bar {
	flex: none;
	display: flex;
	align-items: center;
	height: 24px;
	margin-bottom: 2px;
	padding-left: 4px;
	overflow: hidden;
	border-radius: 3px 0 0 3px;
	background: linear-gradient(#fcfbf8, #ece9d8);
}
.grip {
	flex: none;
	align-self: center;
	width: 3px;
	height: 16px;
	background: repeating-linear-gradient(#b8b4a4 0 2px, transparent 2px 4px);
}
.sep {
	flex: none;
	width: 1px;
	height: 15px;
	background: #c5c2b0;
}
.tool.off {
	color: #aca899;
}
.tool.on {
	height: 22px;
	padding: 0 4px 0 3px;
	border: 1px solid #316ac5;
	background: #e1e6e8;
}
.edit-bar {
	align-items: flex-end;
	gap: 8px;
	height: 14px;
	padding-bottom: 4px;
}
.edit-bar .grip {
	margin-right: -3px;
}
.edit-bar .sep {
	margin: 0 -1px 0 -2px;
}
.combo-bar {
	gap: 3px;
}
.combo-bar .grip {
	margin-right: -1px;
}
.combo {
	position: relative;
	flex: none;
	width: 69px;
	height: 18px;
	background: #fff;
}
.combo.small {
	width: 58px;
}
.combo::after {
	content: "";
	position: absolute;
	right: 3px;
	top: 8px;
	width: 7px;
	height: 4px;
	background: #000;
	clip-path: polygon(0 0, 100% 0, 50% 100%);
}
select {
	appearance: none;
	display: block;
	width: 100%;
	height: 100%;
	margin: 0;
	padding: 0 12px 2px 1px;
	border: 0;
	border-radius: 0;
	background: linear-gradient(#f6f4ec, #ece9d8) right / 12px 100% no-repeat;
	color: #000;
	font: inherit;
}
.latin select {
	font: 10px/16px "DejaVu Sans Mono", monospace;
}
.combo-bar .tool.on + .tool {
	margin-right: 1px;
}
.draw-bar {
	gap: 7px;
	margin-bottom: 1px;
}
.draw-bar .grip {
	margin-right: -6px;
}
.draw-bar .tool.on {
	margin-right: -3px;
}
.draw-bar .sep {
	margin-right: -1px;
}
.blank {
	width: 56px;
	height: 19px;
	border: 1px solid #aca899;
	background: none;
}
.blank select {
	background: none;
}
.blank::after {
	background: #aca899;
}
.draw-bar .blank {
	margin: 0 -2px;
}

/* 3d view */
.viewport {
	position: relative;
	flex: 1;
	min-height: 0;
	overflow: hidden;
	background: #000;
}
.scene {
	display: block;
	width: 100%;
	height: 100%;
}
/* model coordinates start at the window corner */
.space {
	transform: translate(-582px, -67px);
}
.crisp {
	shape-rendering: crispEdges;
}
.dims text {
	fill: #e0e0e0;
	font: 15px "Liberation Sans", sans-serif;
	text-anchor: middle;
}
.dialog {
	position: absolute;
	left: 2px;
	top: 2px;
	width: 174px;
	padding: 0 4px 4px 3px;
	border: 1px solid #4a58c0;
	background: linear-gradient(#6c88dc, #7c94e8 8px, #7080d8 24px, #7b86dc);
}
.dialog h2 {
	margin: 0;
	padding-top: 3px;
	color: #d4e2fa;
	font-size: 13px;
	line-height: 17px;
}
.checks {
	height: 147px;
	padding: 3px 4px;
	border: 1px solid #7f9db9;
	background: #fff;
}
.checks label {
	display: flex;
	align-items: center;
	gap: 4px;
	height: 12px;
	line-height: 12px;
}
.checks input {
	appearance: none;
	width: 11px;
	height: 11px;
	margin: 0;
	border: 1px solid #8c8878;
	background: #f4f4f0;
}
.checks input:checked::before {
	content: "";
	display: block;
	width: 7px;
	height: 7px;
	margin: 1px;
	background: #21a121;
	clip-path: polygon(0 35%, 40% 60%, 100% 0, 100% 35%, 40% 100%, 0 65%);
}

/* red marks over the whole window */
.notes {
	position: absolute;
	left: 0;
	top: 0;
	width: 100%;
	height: 100%;
	pointer-events: none;
}
```
